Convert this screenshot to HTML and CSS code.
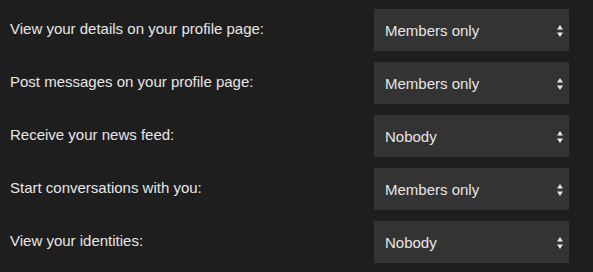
FILE: index.html
```html
<!DOCTYPE html>
<html>
<head>
  <title>Privacy settings</title>
  <link rel="stylesheet" href="styles.css">
</head>
<body>
<form class="privacy-form">
  <div class="privacy-row">
    <label for="viewDetails">View your details on your profile page:</label>
    <div class="select-wrap">
      <select id="viewDetails">
        <option>Members only</option>
        <option>Everyone</option>
        <option>Nobody</option>
      </select>
      <svg class="select-arrows" width="6" height="12" viewBox="0 0 6 12"><path d="M3 0 L6 4.5 H0 Z M3 12 L6 7.5 H0 Z" fill="#e6e6e6"/></svg>
    </div>
  </div>
  <div class="privacy-row">
    <label for="postMessages">Post messages on your profile page:</label>
    <div class="select-wrap">
      <select id="postMessages">
        <option>Members only</option>
        <option>Everyone</option>
        <option>Nobody</option>
      </select>
      <svg class="select-arrows" width="6" height="12" viewBox="0 0 6 12"><path d="M3 0 L6 4.5 H0 Z M3 12 L6 7.5 H0 Z" fill="#e6e6e6"/></svg>
    </div>
  </div>
  <div class="privacy-row">
    <label for="newsFeed">Receive your news feed:</label>
    <div class="select-wrap">
      <select id="newsFeed">
        <option>Nobody</option>
        <option>Members only</option>
        <option>Everyone</option>
      </select>
      <svg class="select-arrows" width="6" height="12" viewBox="0 0 6 12"><path d="M3 0 L6 4.5 H0 Z M3 12 L6 7.5 H0 Z" fill="#e6e6e6"/></svg>
    </div>
  </div>
  <div class="privacy-row">
    <label for="conversations">Start conversations with you:</label>
    <div class="select-wrap">
      <select id="conversations">
        <option>Members only</option>
        <option>Everyone</option>
        <option>Nobody</option>
      </select>
      <svg class="select-arrows" width="6" height="12" viewBox="0 0 6 12"><path d="M3 0 L6 4.5 H0 Z M3 12 L6 7.5 H0 Z" fill="#e6e6e6"/></svg>
    </div>
  </div>
  <div class="privacy-row">
    <label for="identities">View your identities:</label>
    <div class="select-wrap">
      <select id="identities">
        <option>Nobody</option>
        <option>Members only</option>
        <option>Everyone</option>
      </select>
      <svg class="select-arrows" width="6" height="12" viewBox="0 0 6 12"><path d="M3 0 L6 4.5 H0 Z M3 12 L6 7.5 H0 Z" fill="#e6e6e6"/></svg>
    </div>
  </div>
</form>
</body>
</html>
```

FILE: styles.css
```css
/* Page */
body {
  margin: 0;
  background-color: #1e1e1e;
  color: #e6e6e6;
  font-family: "Liberation Sans", Arial, sans-serif;
  font-size: 15px;
}

/* Settings list */
.privacy-form {
  display: flex;
  flex-direction: column;
  gap: 11px;
  padding: 9px 24px 0 10px;
}

.privacy-row {
  display: flex;
  align-items: center;
  justify-content: space-between;
}

.privacy-row label {
  margin-top: -3px;
}

/* Dropdown */
.select-wrap {
  position: relative;
  width: 195px;
  height: 42px;
}

.select-wrap select {
  appearance: none;
  -webkit-appearance: none;
  width: 100%;
  height: 100%;
  margin: 0;
  padding: 0 24px 0 11px;
  border: none;
  border-radius: 0;
  background-color: #333333;
  color: #e6e6e6;
  font-family: inherit;
  font-size: 15px;
  outline: none;
}

.select-arrows {
  position: absolute;
  top: 16px;
  right: 6px;
  pointer-events: none;
}
```
